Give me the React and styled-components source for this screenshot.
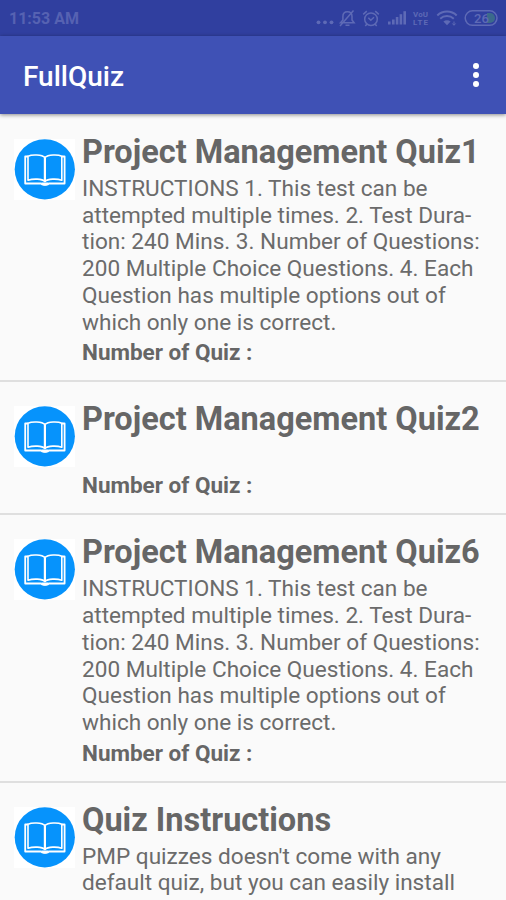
import React from 'react'
import styled, { createGlobalStyle } from 'styled-components'

const instructions = [
  'INSTRUCTIONS 1. This test can be',
  'attempted multiple times. 2. Test Dura-',
  'tion: 240 Mins. 3. Number of Questions:',
  '200 Multiple Choice Questions. 4. Each',
  'Question has multiple options out of',
  'which only one is correct.'
]

const quizzes = [
  { title: 'Project Management Quiz1', lines: instructions, count: 'Number of Quiz :' },
  { title: 'Project Management Quiz2', lines: [], count: 'Number of Quiz :' },
  { title: 'Project Management Quiz6', lines: instructions, count: 'Number of Quiz :' },
  {
    title: 'Quiz Instructions',
    lines: [
      "PMP quizzes doesn't come with any",
      'default quiz, but you can easily install'
    ]
  }
]

const StatusIcons = () => (
  <StatusSvg viewBox="0 0 186 24">
    <g fill="currentColor">
      <circle cx="5.5" cy="15.3" r="1.9" />
      <circle cx="12" cy="15.3" r="1.9" />
      <circle cx="18.5" cy="15.3" r="1.9" />
      <rect x="75" y="14.5" width="2.6" height="3" />
      <rect x="79" y="12.5" width="2.6" height="5" />
      <rect x="82.8" y="10" width="2.6" height="7.5" />
      <rect x="86.6" y="7.2" width="2.6" height="10.3" />
      <rect x="90.4" y="4.2" width="2.6" height="13.3" />
      <path d="M130.4 14.6a5.2 5.2 0 0 1 7.2 0l-3.6 3.7z" />
    </g>
    <g fill="none" stroke="currentColor" strokeWidth="1.5">
      <path d="M27.5 15.7h13.6l-2.1-2.7V9.5c0-3-2-4.8-4.6-4.8s-4.5 1.8-4.5 4.8v3.5zM32.5 18.2h4M27 19 40.5 3.5" />
      <circle cx="58" cy="12.2" r="6.3" />
      <path d="M55.3 10.8 57.8 13.2 61 10.3M50.2 7.4l3.6-3.3M65.8 7.4l-3.6-3.3M54 17l-1.7 2M62 17l1.7 2" />
      <path d="M124.3 8.5a14 14 0 0 1 19.4 0M127.2 11.7a9.8 9.8 0 0 1 13.6 0" strokeWidth="2" />
      <path d="M141 14.5v3.5M139.4 16.5l1.6 1.8 1.6-1.8" strokeWidth="1" />
      <rect x="152.2" y="3.8" width="31.8" height="14.5" rx="7.25" />
    </g>
    <path d="M174 6h3a5 5 0 0 1 0 10.1h-3z" fill="#3b6a8b" />
    <g fill="currentColor" fontFamily="Roboto, sans-serif" fontWeight="700">
      <text x="100" y="9.7" fontSize="7.9" textLength="15">VoU</text>
      <text x="100" y="17.7" fontSize="7.9" textLength="15">LTE</text>
      <text x="161" y="15.7" fontSize="13" fontWeight="500">26</text>
    </g>
  </StatusSvg>
)

const BookIcon = () => (
  <BookSvg viewBox="0 0 61 61">
    <circle cx="30.8" cy="30.3" r="30.1" fill="#0693fc" />
    <g fill="none" stroke="#fff" strokeLinejoin="round">
      <path d="M14 17.5H11.2v27H27c.8 1.8 7.2 1.8 8 0h15.6v-27H47.8" strokeWidth="1.8" />
      <path
        d="M30.9 18.5C28 15.5 18 15.3 14 17.2V41.2C19 39.6 28 39.6 30.9 42.5C34 39.6 43 39.6 47.8 41.2V17.2C44 15.3 34 15.5 30.9 18.5z"
        strokeWidth="1.6"
      />
      <path d="M30.9 18.5V43" strokeWidth="2.2" />
    </g>
    <path d="M27.5 43.4h7v1.8c-1 1.7-6 1.7-7 0z" fill="#fff" />
  </BookSvg>
)

const Quiz = ({ title, lines, count }) => (
  <Row>
    <Thumb>
      <BookIcon />
    </Thumb>
    <Details>
      <Title>{title}</Title>
      <Description>
        {lines.map(line => <Line key={line}>{line}</Line>)}
      </Description>
      {count ? <Count>{count}</Count> : null}
    </Details>
  </Row>
)

export default function App() {
  return (
    <Screen>
      <GlobalStyle />
      <StatusBar>
        <Clock>11:53 AM</Clock>
        <StatusIcons />
      </StatusBar>
      <Toolbar>
        <AppName>FullQuiz</AppName>
        <MenuButton aria-label="More options">
          <Dot />
          <Dot />
          <Dot />
        </MenuButton>
      </Toolbar>
      <List>
        {quizzes.map(quiz => <Quiz key={quiz.title} {...quiz} />)}
      </List>
    </Screen>
  )
}

const GlobalStyle = createGlobalStyle`
  body {
    margin: 0;
    background: #fafafa;
    font-family: Roboto, sans-serif;
  }
`

const Screen = styled.div`
  display: flex;
  flex-direction: column;
  width: 506px;
  height: 900px;
  overflow: hidden;
  background: #fafafa;
`

const StatusBar = styled.div`
  flex: none;
  display: flex;
  justify-content: space-between;
  box-sizing: border-box;
  height: 36px;
  padding: 7px 7px 0 9px;
  background: #303f9f;
  color: #5e6ab6;
`

const Clock = styled.span`
  font-size: 16px;
  font-weight: 700;
  line-height: 24px;
  color: #5662b2;
`

const StatusSvg = styled.svg`
  width: 186px;
  height: 24px;
`

const Toolbar = styled.div`
  position: relative;
  flex: none;
  display: flex;
  align-items: center;
  justify-content: space-between;
  box-sizing: border-box;
  height: 78px;
  padding: 0 27px 0 23px;
  background: #3f51b5;
  box-shadow: 0 1px 4px rgba(0, 0, 0, 0.45);
`

const AppName = styled.h1`
  margin: 3px 0 0;
  font-size: 28px;
  font-weight: 500;
  line-height: 34px;
  color: #fff;
`

const MenuButton = styled.button`
  display: flex;
  flex-direction: column;
  gap: 3px;
  margin: 0;
  padding: 0;
  border: 0;
  background: none;
`

const Dot = styled.span`
  width: 5.8px;
  height: 5.8px;
  border-radius: 50%;
  background: #fff;
`

const List = styled.div`
  flex: none;
  padding-top: 0.8px;
`

const Row = styled.div`
  display: flex;
  box-sizing: border-box;
  padding: 18.1px 0 14px 14px;
  border-bottom: 2px solid #dfdfdf;

  &:last-child {
    border-bottom: 0;
  }
`

const Thumb = styled.div`
  flex: none;
  width: 61px;
  height: 61px;
  margin: 6px 7px 0 0;
  background: #fff;
`

const BookSvg = styled.svg`
  display: block;
  width: 61px;
  height: 61px;
`

const Details = styled.div`
  color: #666;
  white-space: nowrap;
`

const Title = styled.h2`
  margin: 0 0 5px;
  font-size: 32.5px;
  font-weight: 700;
  line-height: 38px;
`

const Description = styled.div`
  min-height: 26.7px;
  font-size: 22.59px;
  line-height: 26.75px;
  color: #6b6b6b;
`

const Line = styled.div``

const Count = styled.div`
  margin-top: 2.6px;
  font-size: 22.5px;
  font-weight: 700;
  line-height: 27px;
`
